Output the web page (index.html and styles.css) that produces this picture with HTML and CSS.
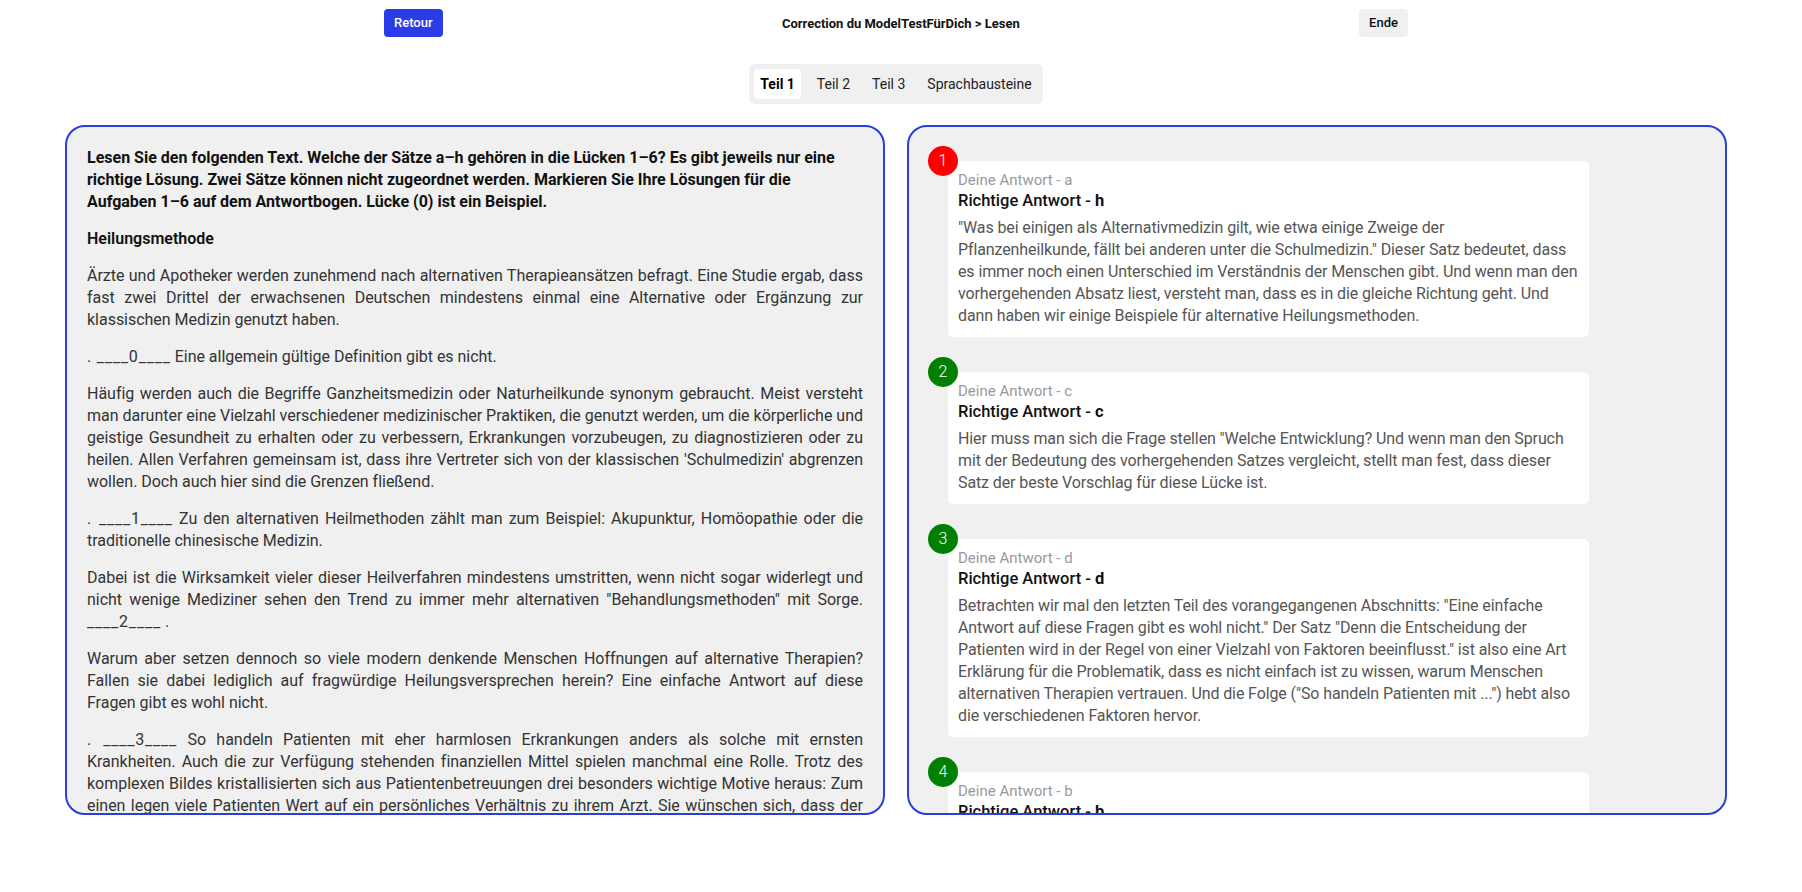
FILE: index.html
```html
<!DOCTYPE html>
<html lang="de">
<head>
<meta charset="utf-8">
<title>Correction du ModelTestFürDich &gt; Lesen</title>
<link rel="stylesheet" href="styles.css">
</head>
<body>
<div class="page">
  <header class="topbar">
    <button class="btn btn-primary">Retour</button>
    <div class="title">Correction du ModelTestFürDich &gt; Lesen</div>
    <button class="btn btn-light">Ende</button>
  </header>

  <nav class="tabs-row">
    <div class="tabs">
      <span class="tab active">Teil 1</span>
      <span class="tab">Teil 2</span>
      <span class="tab">Teil 3</span>
      <span class="tab">Sprachbausteine</span>
    </div>
  </nav>

  <main class="panels">
    <section class="panel text-panel">
      <p class="instructions">Lesen Sie den folgenden Text. Welche der Sätze a–h gehören in die Lücken 1–6? Es gibt jeweils nur eine richtige Lösung. Zwei Sätze können nicht zugeordnet werden. Markieren Sie Ihre Lösungen für die Aufgaben 1–6 auf dem Antwortbogen. Lücke (0) ist ein Beispiel.</p>
      <p class="text-title">Heilungsmethode</p>
      <p>Ärzte und Apotheker werden zunehmend nach alternativen Therapieansätzen befragt. Eine Studie ergab, dass fast zwei Drittel der erwachsenen Deutschen mindestens einmal eine Alternative oder Ergänzung zur klassischen Medizin genutzt haben.</p>
      <p><span class="blank">. ____0____</span> Eine allgemein gültige Definition gibt es nicht.</p>
      <p>Häufig werden auch die Begriffe Ganzheitsmedizin oder Naturheilkunde synonym gebraucht. Meist versteht man darunter eine Vielzahl verschiedener medizinischer Praktiken, die genutzt werden, um die körperliche und geistige Gesundheit zu erhalten oder zu verbessern, Erkrankungen vorzubeugen, zu diagnostizieren oder zu heilen. Allen Verfahren gemeinsam ist, dass ihre Vertreter sich von der klassischen 'Schulmedizin' abgrenzen wollen. Doch auch hier sind die Grenzen fließend.</p>
      <p><span class="blank">. ____1____</span> Zu den alternativen Heilmethoden zählt man zum Beispiel: Akupunktur, Homöopathie oder die traditionelle chinesische Medizin.</p>
      <p>Dabei ist die Wirksamkeit vieler dieser Heilverfahren mindestens umstritten, wenn nicht sogar widerlegt und nicht wenige Mediziner sehen den Trend zu immer mehr alternativen "Behandlungsmethoden" mit Sorge. <span class="blank">____2____</span> .</p>
      <p>Warum aber setzen dennoch so viele modern denkende Menschen Hoffnungen auf alternative Therapien? Fallen sie dabei lediglich auf fragwürdige Heilungsversprechen herein? Eine einfache Antwort auf diese Fragen gibt es wohl nicht.</p>
      <p><span class="blank">. ____3____</span> So handeln Patienten mit eher harmlosen Erkrankungen anders als solche mit ernsten Krankheiten. Auch die zur Verfügung stehenden finanziellen Mittel spielen manchmal eine Rolle. Trotz des komplexen Bildes kristallisierten sich aus Patientenbetreuungen drei besonders wichtige Motive heraus: Zum einen legen viele Patienten Wert auf ein persönliches Verhältnis zu ihrem Arzt. Sie wünschen sich, dass der Arzt sich Zeit für sie nimmt und auf ihre Fragen eingeht. Zum anderen spielt die Angst vor Nebenwirkungen eine große Rolle.</p>
      <p><span class="blank">. ____4____</span> Außerdem hoffen viele Menschen, selbst aktiv zu ihrer Heilung beitragen zu können.</p>
    </section>

    <section class="panel answers-panel">
      <div class="answer">
        <span class="badge wrong">1</span>
        <div class="card">
          <div class="given">Deine Antwort - a</div>
          <div class="correct">Richtige Antwort - <b>h</b></div>
          <p class="explain">"Was bei einigen als Alternativmedizin gilt, wie etwa einige Zweige der Pflanzenheilkunde, fällt bei anderen unter die Schulmedizin." Dieser Satz bedeutet, dass es immer noch einen Unterschied im Verständnis der Menschen gibt. Und wenn man den vorhergehenden Absatz liest, versteht man, dass es in die gleiche Richtung geht. Und dann haben wir einige Beispiele für alternative Heilungsmethoden.</p>
        </div>
      </div>
      <div class="answer">
        <span class="badge right">2</span>
        <div class="card">
          <div class="given">Deine Antwort - c</div>
          <div class="correct">Richtige Antwort - <b>c</b></div>
          <p class="explain">Hier muss man sich die Frage stellen "Welche Entwicklung? Und wenn man den Spruch mit der Bedeutung des vorhergehenden Satzes vergleicht, stellt man fest, dass dieser Satz der beste Vorschlag für diese Lücke ist.</p>
        </div>
      </div>
      <div class="answer">
        <span class="badge right">3</span>
        <div class="card">
          <div class="given">Deine Antwort - d</div>
          <div class="correct">Richtige Antwort - <b>d</b></div>
          <p class="explain">Betrachten wir mal den letzten Teil des vorangegangenen Abschnitts: "Eine einfache Antwort auf diese Fragen gibt es wohl nicht." Der Satz "Denn die Entscheidung der Patienten wird in der Regel von einer Vielzahl von Faktoren beeinflusst." ist also eine Art Erklärung für die Problematik, dass es nicht einfach ist zu wissen, warum Menschen alternativen Therapien vertrauen. Und die Folge ("So handeln Patienten mit ...") hebt also die verschiedenen Faktoren hervor.</p>
        </div>
      </div>
      <div class="answer">
        <span class="badge right">4</span>
        <div class="card">
          <div class="given">Deine Antwort - b</div>
          <div class="correct">Richtige Antwort - <b>b</b></div>
          <p class="explain">Im vorherigen Satz wird gesagt, dass die Mediziner den Trend mit Sorge sehen. Der Satz b erklärt, warum das so ist.</p>
        </div>
      </div>
    </section>
  </main>
</div>
</body>
</html>
```

FILE: styles.css
```css
* { box-sizing: border-box; }

html, body {
  margin: 0;
  padding: 0;
  background: #ffffff;
}

body {
  font-family: Roboto, "Liberation Sans", sans-serif;
  color: #222;
}

.page {
  width: 1792px;
}

/* Top bar */
.topbar {
  width: 1024px;
  margin: 0 auto;
  padding-top: 9px;
  display: flex;
  align-items: center;
  justify-content: space-between;
}

.btn {
  font-family: Roboto, "Liberation Sans", sans-serif;
  font-size: 13px;
  font-weight: 500;
  height: 28px;
  padding: 0 10px;
  border: none;
  border-radius: 4px;
  line-height: 28px;
}

.btn-primary {
  background: #2b3ce6;
  color: #ffffff;
}

.btn-light {
  background: #f0f0f0;
  color: #111;
}

.title {
  font-size: 13px;
  font-weight: 700;
  color: #111;
}

/* Tabs */
.tabs-row {
  display: flex;
  justify-content: center;
  margin-top: 27px;
}

.tabs {
  display: flex;
  gap: 10px;
  padding: 5px;
  background: #f0f0f0;
  border-radius: 5px;
}

.tab {
  font-size: 14px;
  line-height: 20px;
  padding: 5px 6px;
  color: #222;
  border-radius: 4px;
}

.tab.active {
  background: #ffffff;
  font-weight: 700;
  color: #000;
}

/* Panels */
.panels {
  display: flex;
  gap: 22px;
  padding: 0 65px;
  margin-top: 21px;
}

.panel {
  width: 820px;
  height: 690px;
  background: #f0f0f0;
  border: 2px solid #2b3ce0;
  border-radius: 20px;
  overflow: hidden;
}

.text-panel {
  padding: 20px 20px;
}

.text-panel p {
  margin: 0 0 15px 0;
  font-size: 16px;
  line-height: 22px;
  color: #333;
  text-align: justify;
  letter-spacing: -0.02px;
}

.text-panel .blank {
  letter-spacing: 0.8px;
}

.text-panel p.instructions {
  font-weight: 700;
  color: #111;
  text-align: left;
  letter-spacing: 0;
}

.text-panel p.text-title {
  font-weight: 600;
  color: #111;
  text-align: left;
  letter-spacing: 0;
}

/* Answers */
.answers-panel {
  padding: 19px;
}

.answer {
  position: relative;
  padding: 15px 0 0 20px;
  margin-bottom: 20px;
}

.badge {
  position: absolute;
  left: 0;
  top: 0;
  width: 30px;
  height: 30px;
  border-radius: 50%;
  color: #fff;
  font-size: 16px;
  font-weight: 300;
  line-height: 30px;
  text-align: center;
}

.badge.wrong { background: #ff0000; }
.badge.right { background: #008000; }

.card {
  width: 641px;
  background: #ffffff;
  border-radius: 5px;
  padding: 10px;
}

.given {
  font-size: 15px;
  line-height: 19px;
  color: #999;
  font-weight: 400;
}

.correct {
  font-size: 16.5px;
  line-height: 21px;
  color: #111;
  font-weight: 500;
}

.correct b {
  font-weight: 700;
}

.explain {
  margin: 6px 0 0 0;
  font-size: 16px;
  line-height: 22px;
  color: #555;
  font-weight: 400;
  letter-spacing: -0.11px;
}
```
